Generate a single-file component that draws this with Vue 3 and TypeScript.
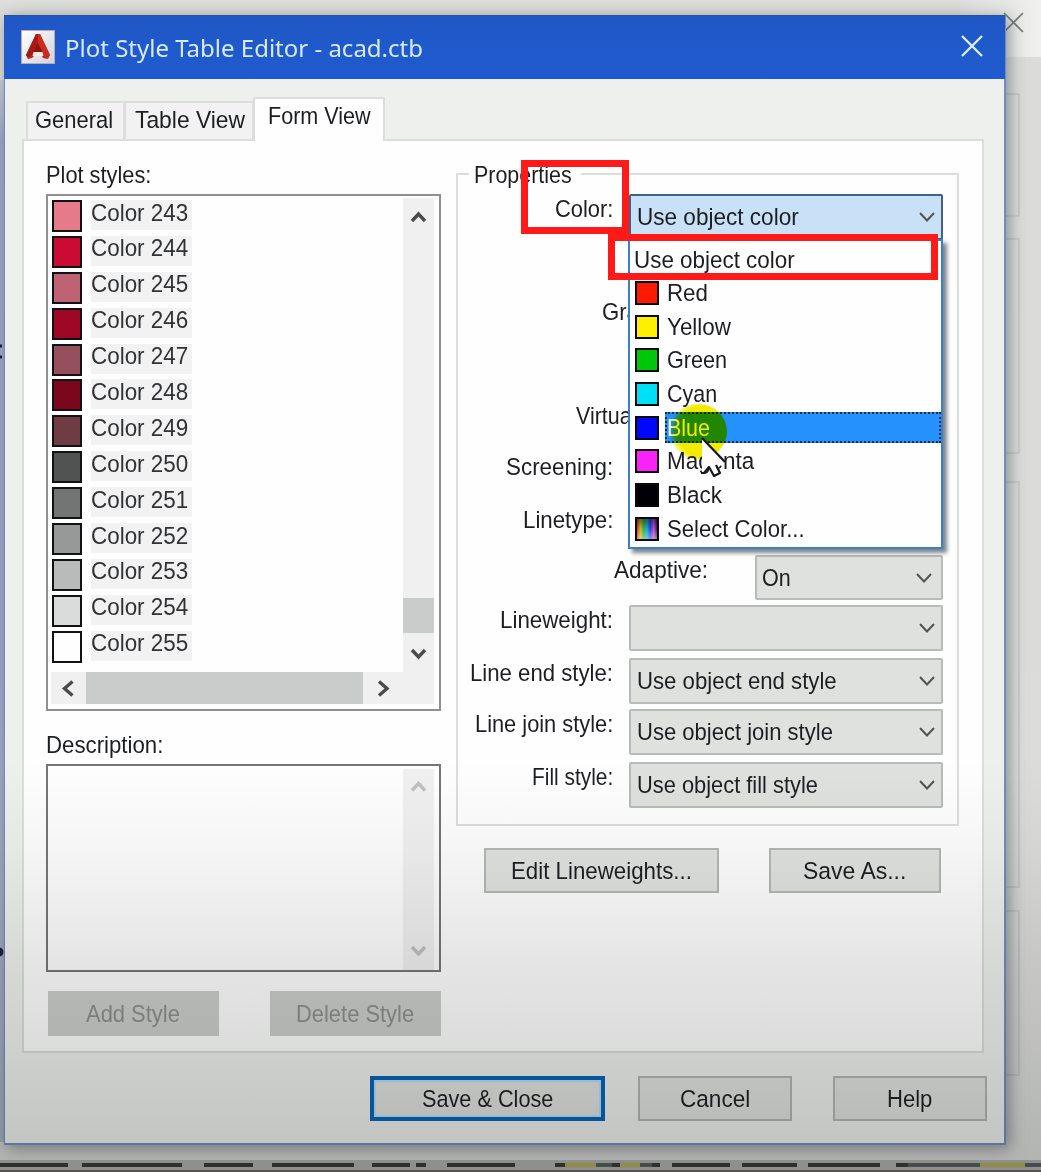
<script setup lang="ts">
import type { Directive } from 'vue'

// Condenses or widens a label so that it takes exactly the given number of pixels.
const vFit: Directive<HTMLElement, number> = {
  mounted(el, { value }) {
    const natural = el.offsetWidth
    el.style.transform = `scaleX(${value / natural})`
    el.style.marginRight = `${value - natural}px`
  },
}

interface PlotStyle { id: number; color: string }
const plotStyles: PlotStyle[] = [
  { id: 243, color: '#e67a8b' },
  { id: 244, color: '#cb0b31' },
  { id: 245, color: '#bd6373' },
  { id: 246, color: '#9e0826' },
  { id: 247, color: '#96505d' },
  { id: 248, color: '#7a071c' },
  { id: 249, color: '#703c44' },
  { id: 250, color: '#505352' },
  { id: 251, color: '#737574' },
  { id: 252, color: '#979998' },
  { id: 253, color: '#b9bbba' },
  { id: 254, color: '#dadcdb' },
  { id: 255, color: '#fdfefd' },
]

interface Option { name: string; color: string; width: number }
const options: Option[] = [
  { name: 'Red', color: '#fc1b00', width: 41 },
  { name: 'Yellow', color: '#fdf000', width: 64 },
  { name: 'Green', color: '#00c70a', width: 60 },
  { name: 'Cyan', color: '#00dff8', width: 50 },
  { name: 'Blue', color: '#0008fb', width: 43 },
  { name: 'Magenta', color: '#fb22f8', width: 87 },
  { name: 'Black', color: '#000006', width: 55 },
  { name: 'Select Color...', color: 'spectrum', width: 138 },
]

interface Field { label: string; labelWidth: number; height: number; combo?: string; comboWidth?: number; kind?: string }
const fields: Field[] = [
  { label: 'Color:', labelWidth: 58, height: 103, combo: 'Use object color', comboWidth: 162, kind: 'open' },
  { label: 'Gra', labelWidth: 37, height: 104, kind: 'gray' },
  { label: 'Virtua', labelWidth: 56, height: 51, kind: 'virtual' },
  { label: 'Screening:', labelWidth: 107, height: 53 },
  { label: 'Linetype:', labelWidth: 90, height: 50 },
  { label: 'Adaptive:', labelWidth: 94, height: 50, combo: 'On', comboWidth: 29, kind: 'adaptive' },
  { label: 'Lineweight:', labelWidth: 113, height: 53, combo: '', comboWidth: 0 },
  { label: 'Line end style:', labelWidth: 143, height: 51, combo: 'Use object end style', comboWidth: 200 },
  { label: 'Line join style:', labelWidth: 138, height: 53, combo: 'Use object join style', comboWidth: 196 },
  { label: 'Fill style:', labelWidth: 81, height: 46, combo: 'Use object fill style', comboWidth: 181 },
]

const frames = [
  { top: 93, height: 124 },
  { top: 238, height: 216 },
  { top: 481, height: 407 },
  { top: 910, height: 166 },
]
</script>

<template>
  <div class="screen">
    <div class="behind">
      <div class="behind-head"></div>
      <div v-for="f in frames" :key="f.top" class="behind-frame" :style="{ top: f.top + 'px', height: f.height + 'px' }"></div>
      <svg class="behind-x" width="22" height="22" viewBox="0 0 22 22"><path d="M1 1 20 20M20 1 1 20" stroke="#777976" stroke-width="1.6" /></svg>
      <div class="behind-left"></div>
      <svg class="behind-marks" width="4" height="620" viewBox="0 0 4 620"><path d="M0 6H2M0 17H2" stroke="#14203f" stroke-width="3" /><circle cx="-1" cy="612" r="4.500" fill="#14203f" /></svg>
      <svg class="taskline" width="1041" height="14" viewBox="0 0 1041 14">
        <rect width="1041" height="14" fill="#8f908d" />
        <path d="M0 5H68M82 5H182M204 5H253M272 5H354M372 5H410M416 5H426M447 5H515M555 5H565M583 5H660M672 5H730M742 5H797M808 5H880M896 5H908" stroke="#30312f" stroke-width="4" />
        <path d="M565 5H596M620 5H640M980 5H1025" stroke="#8d8b4f" stroke-width="5" />
        <path d="M596 5H612M640 5H652M908 5H980M1025 5H1041" stroke="#464d50" stroke-width="4" />
        <rect y="10" width="1041" height="4" fill="#555452" />
      </svg>
    </div>

    <section class="dialog">
      <header class="titlebar">
        <svg class="logo" width="34" height="34" viewBox="0 0 34 34">
          <defs>
            <linearGradient id="lg" x1="0" y1="0" x2="1" y2="1"><stop offset="0" stop-color="#fff" /><stop offset="1" stop-color="#cfd3da" /></linearGradient>
          </defs>
          <rect x=".5" y=".5" width="33" height="33" fill="url(#lg)" stroke="#b9a9bb" />
          <path d="M15 4h4l10 21-2 4-5-1-1-2h-8l-2 2-4 1-2-4z" fill="#c3261e" />
          <path d="M15 4h2v12l-5 8-5 4-2-3z" fill="#a61b17" />
          <path d="M17 4h2l10 21-2 3-6-6-4-8z" fill="#cf2c20" />
          <path d="M17 13l5 10H12z" fill="#8e1411" />
          <path d="M12.500 22h9l1 4h-11z" fill="#f4e8e6" />
        </svg>
        <span v-fit="358" class="title">Plot Style Table Editor - acad.ctb</span>
        <svg class="close" width="24" height="24" viewBox="0 0 24 24"><path d="M2 2 22 22M22 2 2 22" stroke="#d9ecff" stroke-width="2.4" /></svg>
      </header>

      <nav class="tabs">
        <div class="tab general"><span v-fit="78" class="t">General</span></div>
        <div class="tab table"><span v-fit="110" class="t">Table View</span></div>
        <div class="tab form"><span v-fit="103" class="t">Form View</span></div>
      </nav>

      <main class="panel">
        <div class="left">
          <div class="caption"><span v-fit="105" class="t">Plot styles:</span></div>
          <div class="listbox">
            <div class="list-main">
              <ul class="rows">
                <li v-for="s in plotStyles" :key="s.id">
                  <i :style="{ background: s.color }"></i>
                  <span class="row-label"><span v-fit="97" class="t">Color {{ s.id }}</span></span>
                </li>
              </ul>
              <div class="vbar">
                <svg width="31" height="40" viewBox="0 0 31 40"><path d="M9 23l6.500-7 6.500 7" class="arrow" /></svg>
                <div class="vthumb"></div>
                <svg width="31" height="39" viewBox="0 0 31 39"><path d="M9 17l6.500 7 6.500-7" class="arrow" /></svg>
              </div>
            </div>
            <div class="hbar">
              <svg width="35" height="31" viewBox="0 0 35 31"><path d="M21.500 9.500l-8 7 8 7" class="arrow" /></svg>
              <div class="hthumb"></div>
              <svg width="40" height="31" viewBox="0 0 40 31"><path d="M16 9.500l8 7-8 7" class="arrow" /></svg>
            </div>
          </div>
          <div class="caption desc"><span v-fit="117" class="t">Description:</span></div>
          <div class="textarea">
            <div class="vbar muted">
              <svg width="31" height="40" viewBox="0 0 31 40"><path d="M9 21.500l6.500-7 6.500 7" class="arrow" /></svg>
              <svg width="31" height="39" viewBox="0 0 31 39"><path d="M9 16l6.500 7 6.500-7" class="arrow" /></svg>
            </div>
          </div>
          <div class="style-buttons">
            <div class="btn disabled"><span v-fit="94" class="t">Add Style</span></div>
            <div class="btn disabled"><span v-fit="118" class="t">Delete Style</span></div>
          </div>
        </div>

        <div class="right">
          <div class="group">
            <div class="legend"><span v-fit="98" class="t">Properties</span></div>
            <div v-for="f in fields" :key="f.label" class="field" :class="f.kind" :style="{ height: f.height + 'px' }">
              <div class="label"><span v-fit="f.labelWidth" class="t">{{ f.label }}</span></div>
              <div v-if="f.combo !== undefined" class="combo">
                <span v-if="f.combo" v-fit="f.comboWidth ?? 0" class="t">{{ f.combo }}</span>
                <svg class="chev" width="18" height="12" viewBox="0 0 18 12"><path d="M2 2l7 7.500L16 2" /></svg>
              </div>
            </div>
          </div>
          <div class="group-buttons">
            <div class="btn edit"><span v-fit="181" class="t">Edit Lineweights...</span></div>
            <div class="btn saveas"><span v-fit="103" class="t">Save As...</span></div>
          </div>
        </div>
      </main>

      <footer class="actions">
        <div class="btn primary"><span v-fit="131" class="t">Save &amp; Close</span></div>
        <div class="btn"><span v-fit="70" class="t">Cancel</span></div>
        <div class="btn"><span v-fit="45" class="t">Help</span></div>
      </footer>
    </section>

    <div class="dropdown">
      <div class="opt first"><span v-fit="161" class="t">Use object color</span></div>
      <div v-for="o in options" :key="o.name" class="opt" :class="{ active: o.name === 'Blue' }">
        <i v-if="o.color !== 'spectrum'" :style="{ background: o.color }"></i>
        <i v-else class="spectrum"></i>
        <div class="opt-text"><span v-fit="o.width" class="t">{{ o.name }}</span></div>
      </div>
    </div>

    <div class="spot"></div>
    <svg class="cursor" width="32" height="46" viewBox="0 0 32 46">
      <path d="M4 2V37l7-6 5 9 6-3-4-8 9-2z" fill="#fffdff" />
      <path d="M4 2 27 26M3 37l3 0 5-6 5 9 6-3-4-8" fill="none" stroke="#17171b" stroke-width="2.200" stroke-linejoin="round" />
    </svg>
    <div class="shade"></div>
    <div class="mark mark-label"></div>
    <div class="mark mark-option"></div>
  </div>
</template>

<style>
body { margin: 0; overflow: hidden; }
</style>

<style scoped>
* { box-sizing: border-box; }
.screen {
  position: relative; width: 1041px; height: 1172px; overflow: hidden; display: flow-root;
  background: linear-gradient(#dfe0dd, #dbdcda 15px, #dcdddb);
  font-family: "Liberation Sans", Arial, sans-serif; font-size: 24.5px; line-height: 28px; color: #1d1e22;
}
.t, .title { display: inline-block; white-space: nowrap; transform-origin: 0 50%; flex: none; }
.behind { position: absolute; inset: 0; }
.behind-head { position: absolute; left: 960px; right: 0; top: 0; height: 57px; background: linear-gradient(90deg, #dfe0dd, #e8e9e7 50px, #f0f1ef); }
.behind-frame { position: absolute; left: 990px; width: 30px; border: 2px solid #cbccca; border-left: 0; }
.behind-x { position: absolute; left: 1003px; top: 12px; }
.behind-left { position: absolute; left: 0; top: 80px; width: 4px; bottom: 30px; background: linear-gradient(#c9cfdb, #9eabc8 60px, #9faccb 600px, #b4bdd0); }
.behind-marks { position: absolute; left: 0; top: 340px; }
.taskline { position: absolute; left: 0; top: 1160px; z-index: 3; }

.dialog {
  position: relative; width: 1002px; height: 1130px; margin: 15px 0 0 4px;
  background: #eef0ee; border: 2px solid #6f8cc5; border-top: 0; border-left-width: 1px;
  box-shadow: 3px 3px 15px rgba(50, 55, 65, .5); display: flex; flex-direction: column;
}
.titlebar { height: 64px; flex: none; margin: 0 -1px; display: flex; align-items: center; padding: 0 21px 0 17px; background: linear-gradient(#2057c5, #1f5bcf); border-top: 1px solid #2d4e99; }
.logo { flex: none; margin-bottom: 1px; }
.title { margin-left: 10px; font-family: "Noto Sans", "Open Sans", sans-serif; font-size: 24px; color: #d6eaff; line-height: 30px; }
.close { margin-left: auto; margin-bottom: 3px; }

.tabs { display: flex; align-items: flex-end; height: 62px; flex: none; padding-left: 21px; position: relative; z-index: 1; margin-bottom: -2px; }
.tab { border: 2px solid #dcdddc; border-bottom: 0; background: #f1f2f1; padding: 3px 0 0 7px; }
.general { width: 99px; height: 40px; border-bottom: 2px solid #dcdddc; }
.table { width: 130px; height: 40px; margin-left: -1px; padding-left: 9px; border-bottom: 2px solid #dcdddc; }
.form { width: 132px; height: 44px; background: #fdfefd; padding: 3px 0 0 13px; margin-left: -1px; }

.panel { width: 962px; height: 914px; flex: none; margin-left: 17px; background: #fdfefd; border: 2px solid #dcdddc; display: flex; padding-left: 22px; }
.left { width: 395px; flex: none; display: flex; flex-direction: column; }
.caption { margin-top: 20px; height: 33px; }
.listbox { height: 517px; border: 2px solid #8d908f; padding: 2px 5px 5px 3px; display: flex; flex-direction: column; }
.list-main { display: flex; justify-content: space-between; height: 475px; }
.rows { list-style: none; margin: 0; padding: 2px 0 0 1px; }
.rows li { display: flex; align-items: flex-start; height: 35.9px; }
.rows i { width: 30px; height: 32px; border: 2px solid #111214; }
.row-label { margin-left: 9px; width: 101px; height: 30px; background: #f1f2f1; }
.row-label .t { position: relative; top: -1.500px; color: #303236; }
.vbar { width: 31px; background: #eff0ef; display: flex; flex-direction: column; justify-content: space-between; }
.vthumb { height: 35px; background: #cacccb; margin-top: auto; }
.arrow { fill: none; stroke: #4a4c4c; stroke-width: 3.400; }
.hbar { height: 32px; background: #eff0ef; display: flex; }
.hthumb { width: 277px; background: #cacccb; }
.caption.desc { margin-top: 20px; height: 33px; }
.textarea { height: 208px; border: 2px solid #747776; display: flex; justify-content: flex-end; padding: 3px 5px 0 0; }
.muted .arrow { stroke: #bfc1c0; }
.style-buttons { display: flex; justify-content: space-between; margin-top: 19px; padding-left: 2px; }

.btn { height: 45px; border: 2px solid #b5b7b6; background: #e0e2e0; display: flex; align-items: center; justify-content: center; }
.style-buttons .btn { width: 171px; }
.disabled { background: #cbcdcb; border-color: #cbcdcb; color: #8c8e8c; padding-top: 1px; }
.disabled .t { margin-left: -1px; }

.right { margin-left: 15px; width: 503px; }
.group { margin-top: 32px; height: 653px; border: 2px solid #dcdedc; position: relative; padding-top: 19px; }
.legend { position: absolute; top: -14px; left: 11px; padding: 0 9px 0 5px; background: #fdfefd; }
.field { display: flex; align-items: flex-start; }
.label { width: 155px; display: flex; justify-content: flex-end; padding-top: 1px; flex: none; margin-right: 1px; }
.gray .label { justify-content: flex-start; padding-left: 144px; }
.virtual .label { justify-content: flex-start; padding-left: 118px; }
.combo { margin-left: 15px; width: 314px; height: 46px; border: 2px solid #b9bbba; border-radius: 2px; background: #dfe1df; display: flex; align-items: center; padding: 0 5px 0 6px; }
.open .combo { background: #c8e1f7; border-color: #3f6383; }
.adaptive .label { width: 250px; }
.adaptive .combo { width: 188px; margin-left: 46px; height: 45px; padding-left: 5px; padding-right: 8px; }
.chev { margin-left: auto; flex: none; }
.chev path { fill: none; stroke: #505456; stroke-width: 2; }
.group-buttons { display: flex; margin: 22px 0 0 28px; }
.edit { width: 235px; }
.saveas { width: 172px; margin-left: 50px; }

.actions { display: flex; justify-content: flex-end; margin: 23px 17px 0 0; }
.actions .btn { width: 154px; margin-left: 41px; border-color: #b3b5b4; }
.actions .btn:nth-child(2) { margin-left: 33px; }
.actions .primary { width: 235px; border: 4px solid #0863b8; box-shadow: inset 0 0 0 2px #b2dff5; }

.dropdown { position: absolute; left: 628px; top: 239px; width: 315px; height: 310px; border: 2px solid #3b80c0; background: #fdfefd; box-shadow: 4px 4px 4px rgba(20, 35, 50, .55); padding: 3px 0 0 4.500px; }
.opt { height: 33.700px; display: flex; align-items: flex-start; }
.opt.first { padding: 2px 0 0 0; height: 37px; margin-left: -1px; margin-right: 1px; }
.opt i { width: 24px; height: 24px; margin-top: 0; border: 2px solid #08090b; flex: none; }
.opt .spectrum { background: linear-gradient(rgba(0,0,0,.45), transparent 50%, rgba(255,255,255,.4)), linear-gradient(90deg, #c53a12, #d8b322, #29b646, #22a9db, #2444d8, #c94ad4, #402050); }
.opt-text { flex: 1; height: 31px; margin: -2px 0 0 6px; padding: 0 0 0 2px; }
.active .opt-text { background: #2491fd; color: #fff; outline: 2px dotted #142c48; outline-offset: -2px; margin-top: -4px; padding-top: 2px; }

.spot { position: absolute; left: 669px; top: 404px; width: 58px; height: 55px; border-radius: 50%; background: radial-gradient(circle at 58% 50%, #f4ec00 58%, #f7f250 66%, #fff 78%); mix-blend-mode: multiply; }
.cursor { position: absolute; left: 698px; top: 436px; }
.shade { position: absolute; inset: 0; pointer-events: none; background: linear-gradient(transparent 760px, rgba(10,14,10,.035) 850px, rgba(10,14,10,.1) 960px, rgba(10,14,10,.14) 1050px, rgba(10,14,10,.19) 1144px, rgba(10,14,10,.2)); }
.mark { position: absolute; border: 7px solid #ff1a1a; }
.mark-label { left: 521px; top: 160px; width: 108px; height: 74px; }
.mark-option { left: 608px; top: 234px; width: 330px; height: 46px; }
</style>
